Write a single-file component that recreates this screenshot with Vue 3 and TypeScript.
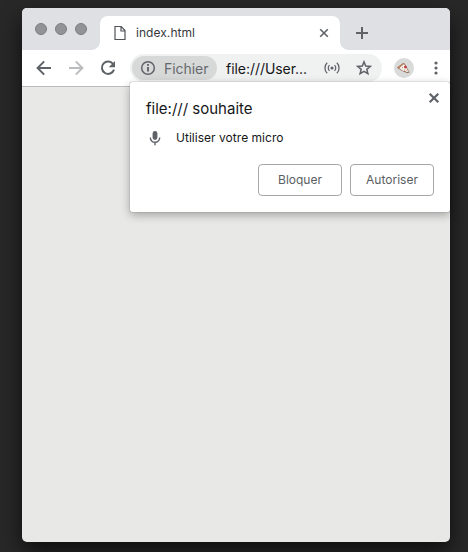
<script setup lang="ts">
interface PromptAction {
  label: string
}

const windowControls: string[] = ['close', 'minimize', 'zoom']
const actions: PromptAction[] = [{ label: 'Bloquer' }, { label: 'Autoriser' }]
</script>

<template>
  <div class="desktop">
    <div class="window">
      <header class="tab-strip">
        <div class="controls">
          <span v-for="control in windowControls" :key="control" class="control" />
        </div>
        <div class="tab">
          <svg class="page-icon" width="12" height="16" viewBox="0 0 12 16">
            <path d="M1 1.5h6.2l3.8 4v9H1zM7 1.8V6h3.8" />
          </svg>
          <span class="tab-title">index.html</span>
          <svg class="tab-close" width="10" height="10" viewBox="0 0 10 10">
            <path d="M1.2 1.2l7.6 7.6M8.8 1.2L1.2 8.8" />
          </svg>
        </div>
        <svg class="new-tab" width="14" height="14" viewBox="0 0 14 14">
          <path d="M7 1v12M1 7h12" />
        </svg>
      </header>

      <nav class="toolbar">
        <svg class="nav-icon" width="16" height="16" viewBox="0 0 16 16">
          <path d="M15 8H2M8.2 1.4L1.6 8l6.6 6.6" />
        </svg>
        <svg class="nav-icon disabled" width="16" height="16" viewBox="0 0 16 16">
          <path d="M1 8h13M7.8 1.4L14.4 8l-6.6 6.6" />
        </svg>
        <svg class="nav-icon" width="16" height="16" viewBox="0 0 16 16">
          <path d="M13.3 4.3A6.2 6.2 0 1 0 14 9.6" />
          <path class="solid" d="M15 1v6.3H8.7z" />
        </svg>
        <div class="address">
          <div class="scheme">
            <svg width="16" height="16" viewBox="0 0 16 16">
              <circle class="info-ring" cx="8" cy="8" r="6.3" />
              <path class="info-mark" d="M8 4v1.8M8 7v4.5" />
            </svg>
            <span class="scheme-text">Fichier</span>
          </div>
          <span class="url">file:///User...</span>
          <svg class="cast" width="16" height="14" viewBox="0 0 16 14">
            <circle cx="8" cy="7" r="1.6" />
            <path d="M5.5 4.1a4 4 0 0 0 0 5.8M10.5 4.1a4 4 0 0 1 0 5.8M3.2 1.7a7.3 7.3 0 0 0 0 10.6M12.8 1.7a7.3 7.3 0 0 1 0 10.6" />
          </svg>
          <svg class="star" width="16" height="16" viewBox="0 0 16 16">
            <path d="M8 1.9l1.7 4.2 4.6.3-3.5 2.9 1.1 4.4L8 11.3l-3.9 2.4 1.1-4.4-3.5-2.9 4.6-.3z" />
          </svg>
        </div>
        <svg class="avatar" width="20" height="20" viewBox="0 0 20 20">
          <circle cx="10" cy="10" r="10" fill="#d9dada" />
          <path d="M3 9.7L9.2 5l1.6.6 4.9 8.8-2.4.8-2.3-1-2-.6-4.6-2.8z" fill="#9a7663" />
          <path d="M4.8 9.7L10 5.9l4.7 7.9-2.1.1-1.7-1.1-1.8.2z" fill="#f5eee6" />
          <path d="M3 9.6L9.2 5l1 .5L4.8 10.4z" fill="#b98065" />
          <path d="M8 9h1v1H8zM10 11.4h1v1h-1zM12.5 11.8h1v1h-1z" fill="#b09a82" />
          <circle cx="11.4" cy="9.1" r="1.4" fill="#c4363d" />
        </svg>
        <svg class="menu" width="4" height="14" viewBox="0 0 4 14">
          <circle cx="2" cy="2" r="1.6" />
          <circle cx="2" cy="7" r="1.6" />
          <circle cx="2" cy="12" r="1.6" />
        </svg>
      </nav>

      <main class="page" />

      <section class="prompt">
        <svg class="prompt-close" width="12" height="12" viewBox="0 0 12 12">
          <path d="M1.7 1.7l8.6 8.6M10.3 1.7l-8.6 8.6" />
        </svg>
        <h1 class="prompt-title">file:/// souhaite</h1>
        <div class="permission">
          <svg width="18" height="18" viewBox="0 0 18 18">
            <rect class="mic-body" x="6.6" y="2" width="4.8" height="9" rx="2.4" />
            <path class="mic-stand" d="M4.3 8.6a4.7 4.7 0 0 0 9.4 0M9 13v3.2" />
          </svg>
          <span class="permission-text">Utiliser votre micro</span>
        </div>
        <div class="actions">
          <button v-for="action in actions" :key="action.label" class="action" type="button">
            {{ action.label }}
          </button>
        </div>
      </section>
    </div>
  </div>
</template>

<style>
body {
  margin: 0;
  overflow: hidden;
}
</style>

<style scoped>
.desktop {
  box-sizing: border-box;
  width: 468px;
  height: 552px;
  padding: 8px 18px 10px 22px;
  overflow: hidden;
  background: #282828;
  font-family: Inter, "Liberation Sans", sans-serif;
}

.window {
  position: relative;
  display: flex;
  flex-direction: column;
  height: 534px;
  border-radius: 5px;
  background: #e8e8e7;
  box-shadow: 0 10px 22px rgba(0, 0, 0, 0.65);
}

svg {
  display: block;
  flex: none;
  fill: none;
  stroke: #5f6368;
}

.tab-strip {
  display: flex;
  flex: none;
  height: 42px;
  border-radius: 5px 5px 0 0;
  background: #dee0e3;
}

.controls {
  display: flex;
  gap: 8px;
  width: 65px;
  padding: 15px 0 0 13px;
}

.control {
  box-sizing: border-box;
  width: 12px;
  height: 12px;
  border: 1px solid #7c7d80;
  border-radius: 50%;
  background: #929396;
}

.tab {
  position: relative;
  display: flex;
  box-sizing: border-box;
  align-items: center;
  width: 240px;
  height: 34px;
  margin-top: 8px;
  padding: 0 11px 0 14px;
  border-radius: 8px 8px 0 0;
  background: #fff;
}

.tab::before,
.tab::after {
  position: absolute;
  bottom: 0;
  width: 8px;
  height: 8px;
  content: "";
}

.tab::before {
  left: -8px;
  background: radial-gradient(circle at 0 0, transparent 7.5px, #fff 8px);
}

.tab::after {
  right: -8px;
  background: radial-gradient(circle at 100% 0, transparent 7.5px, #fff 8px);
}

.page-icon {
  stroke: #505358;
  stroke-width: 1.2;
}

.tab-title {
  margin-left: 10px;
  color: #35383b;
  font-size: 12px;
  letter-spacing: 0.05px;
  line-height: 18px;
}

.tab-close {
  margin-left: auto;
  stroke-width: 1.6;
}

.new-tab {
  margin: 18px 0 0 15px;
  stroke-width: 2;
}

.toolbar {
  display: flex;
  box-sizing: border-box;
  flex: none;
  align-items: center;
  height: 37px;
  padding: 0 12px 0 14px;
  border-bottom: 1px solid #b8babb;
  background: #fff;
}

.nav-icon {
  margin-right: 16px;
  stroke-width: 2;
}

.nav-icon.disabled {
  stroke: #babcbe;
}

.nav-icon .solid {
  fill: #5f6368;
  stroke: none;
}

.address {
  display: flex;
  box-sizing: border-box;
  align-items: center;
  width: 252px;
  height: 28px;
  margin-left: -2px;
  padding-left: 2px;
  border-radius: 14px;
  background: #f0f1f1;
}

.scheme {
  display: flex;
  box-sizing: border-box;
  align-items: center;
  width: 85px;
  height: 24px;
  padding-left: 8px;
  border-radius: 12px;
  background: #d7d9d9;
}

.info-ring {
  stroke-width: 1.5;
}

.info-mark {
  stroke-width: 1.9;
}

.scheme-text {
  margin-left: 8px;
  color: #65696d;
  font-size: 14px;
  letter-spacing: -0.05px;
}

.url {
  width: 83px;
  margin-left: 9px;
  color: #161719;
  font-size: 14px;
  letter-spacing: -0.05px;
  white-space: nowrap;
}

.cast {
  margin-left: 15px;
  stroke-width: 1.25;
}

.cast circle {
  fill: #5f6368;
  stroke: none;
}

.star {
  margin-left: 16px;
  stroke-width: 1.5;
}

.avatar {
  margin-left: 12px;
  stroke: none;
}

.menu {
  margin-left: auto;
  fill: #5f6368;
  stroke: none;
}

.page {
  flex: 1;
}

.prompt {
  position: absolute;
  top: 74px;
  right: 0;
  box-sizing: border-box;
  width: 320px;
  height: 130px;
  padding: 17px 16px 16px;
  border-radius: 2px;
  background: #fff;
  box-shadow: 0 0 1px rgba(0, 0, 0, 0.65), 0 3px 10px rgba(0, 0, 0, 0.3);
}

.prompt-close {
  position: absolute;
  top: 10px;
  right: 10px;
  stroke-width: 2.2;
}

.prompt-title {
  margin: 0;
  color: #161719;
  font-size: 15px;
  font-weight: 400;
  line-height: 20px;
}

.permission {
  display: flex;
  align-items: center;
  height: 18px;
  margin-top: 10px;
}

.mic-body {
  fill: #5f6368;
  stroke: none;
}

.mic-stand {
  stroke-width: 1.4;
}

.permission-text {
  margin-left: 12px;
  color: #161719;
  font-size: 12px;
  letter-spacing: 0.03px;
  line-height: 18px;
}

.actions {
  display: flex;
  justify-content: flex-end;
  gap: 8px;
  margin-top: 17px;
}

.action {
  box-sizing: border-box;
  width: 84px;
  height: 32px;
  padding: 0 0 2px;
  border: 1px solid #a5a7a9;
  border-radius: 4px;
  background: #fff;
  color: #5a5e63;
  font: 12px Inter, "Liberation Sans", sans-serif;
}
</style>
